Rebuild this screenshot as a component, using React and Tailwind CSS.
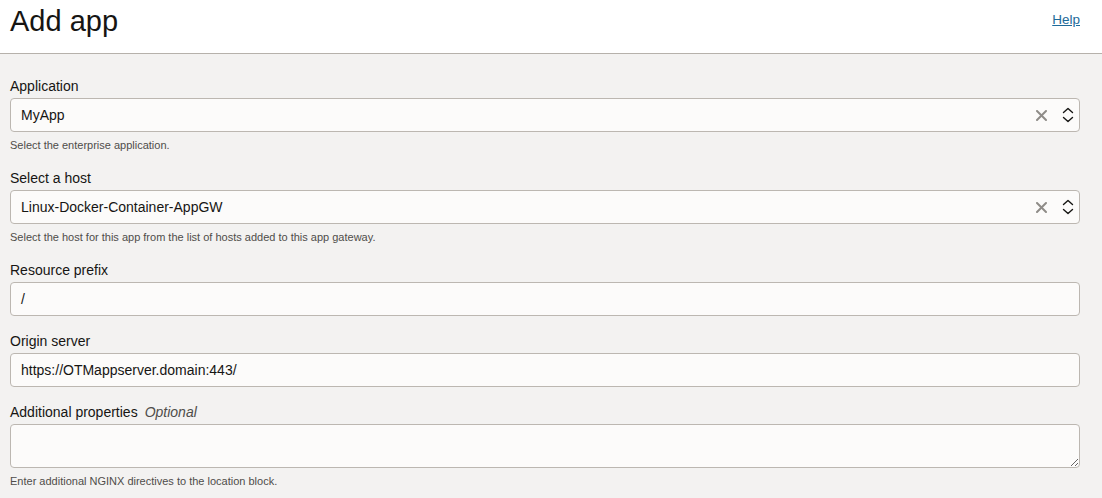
const Chevrons = () => (
  <svg width="12" height="18" viewBox="0 0 12 18" fill="none" stroke="#161513" strokeWidth="1.4" strokeLinecap="round" strokeLinejoin="round">
    <path d="M1.5 6.5 L6 2.5 L10.5 6.5" />
    <path d="M1.5 11.5 L6 15.5 L10.5 11.5" />
  </svg>
);

const Clear = () => (
  <svg width="11" height="11" viewBox="0 0 11 11" stroke="#8f8c88" strokeWidth="2" strokeLinecap="round">
    <path d="M1 1 L10 10 M10 1 L1 10" />
  </svg>
);

const Label = ({ children, optional }) => (
  <div className="text-[14px] leading-[18px] h-[18px] text-[#161513] mb-[3px]">
    {children}
    {optional && <span className="italic text-[#4f4d4a] ml-[7px] text-[14px] leading-[18px]">Optional</span>}
  </div>
);

const Helper = ({ children }) => (
  <div className="text-[11px] leading-[14px] text-[#4f4d4a] mt-[6px]">{children}</div>
);

const SelectBox = ({ value }) => (
  <div className="h-[34px] bg-[#fcfbfa] border border-[#bcb7b1] rounded-[4px] flex items-center pl-[10px] pr-[5px]">
    <span className="flex-1 text-[14px] text-[#161513]">{value}</span>
    <span className="mr-[15px] flex items-center"><Clear /></span>
    <Chevrons />
  </div>
);

const TextBox = ({ value }) => (
  <div className="h-[34px] bg-[#fcfbfa] border border-[#bcb7b1] rounded-[4px] flex items-center pl-[10px]">
    <span className="text-[14px] text-[#161513]">{value}</span>
  </div>
);

export default function App() {
  return (
    <div className="min-h-[498px] bg-[#f3f2f1] font-['Liberation_Sans',Arial,sans-serif]">
      <div className="h-[54px] bg-white border-b border-[#b6b1ab] flex items-start justify-between pl-[10px] pr-[22px]">
        <h1 className="text-[29px] leading-[34px] mt-[4px] text-[#161513]">Add app</h1>
        <a href="#" className="text-[13.5px] mt-[10px] text-[#1e6a99] underline">Help</a>
      </div>
      <div className="px-[10px] pr-[22px] pt-[23px]">
        <div className="mb-[17px]">
          <Label>Application</Label>
          <SelectBox value="MyApp" />
          <Helper>Select the enterprise application.</Helper>
        </div>
        <div className="mb-[17px]">
          <Label>Select a host</Label>
          <SelectBox value="Linux-Docker-Container-AppGW" />
          <Helper>Select the host for this app from the list of hosts added to this app gateway.</Helper>
        </div>
        <div className="mb-[16px]">
          <Label>Resource prefix</Label>
          <TextBox value="/" />
        </div>
        <div className="mb-[16px]">
          <Label>Origin server</Label>
          <TextBox value="https://OTMappserver.domain:443/" />
        </div>
        <div>
          <Label optional>Additional properties</Label>
          <textarea className="block w-full h-[44px] bg-[#fcfbfa] border border-[#bcb7b1] rounded-[4px] outline-none" />
          <Helper>Enter additional NGINX directives to the location block.</Helper>
        </div>
      </div>
    </div>
  );
}
